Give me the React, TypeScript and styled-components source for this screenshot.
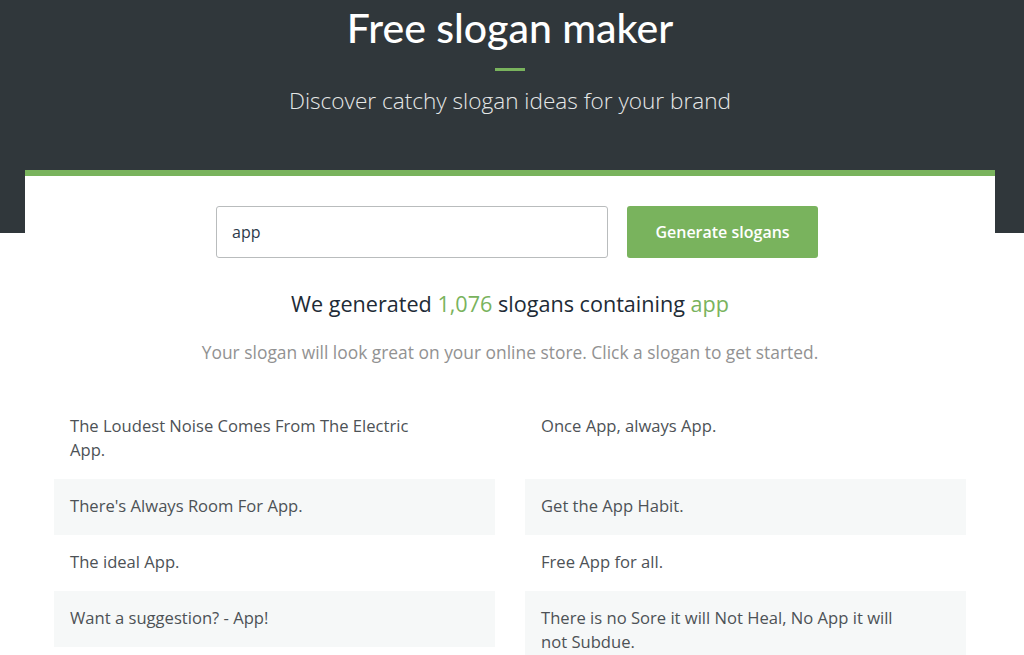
import React from "react";
import styled, { createGlobalStyle } from "styled-components";

const GlobalStyle = createGlobalStyle`
  html, body { margin: 0; padding: 0; background: #ffffff; }
  body { font-family: "Open Sans", Lato, "Liberation Sans", sans-serif; }
  * { box-sizing: border-box; }
`;

const Page = styled.div`
  background: linear-gradient(to bottom, #30373b 0, #30373b 233px, #ffffff 233px);
  min-height: 655px;
  padding: 4px 4px 0 0;
`;

const Hero = styled.header`
  display: flex;
  flex-direction: column;
  align-items: center;
  color: #ffffff;
  height: 166px;
`;

const Title = styled.h1`
  margin: 0;
  font-family: Lato, "Open Sans", sans-serif;
  font-size: 41px;
  line-height: 48px;
  font-weight: 500;
  letter-spacing: 0;
`;

const Dash = styled.span`
  display: block;
  width: 30px;
  height: 3px;
  background: #79b35d;
  margin-top: 16px;
`;

const Subtitle = styled.p`
  margin: 16px 0 0;
  font-size: 22.6px;
  line-height: 28px;
  font-weight: 300;
  color: #e6e8e8;
`;

const Card = styled.main`
  margin: 0 25px;
  background: #ffffff;
  border-top: 6px solid #79b35d;
  padding: 30px 29px 0;
`;

const Form = styled.form`
  display: flex;
  justify-content: center;
  gap: 19px;
  padding-left: 14px;
`;

const Input = styled.input`
  width: 392px;
  height: 52px;
  border: 1px solid #b9bcbd;
  border-radius: 3px;
  padding: 0 15px;
  font-family: inherit;
  font-size: 16px;
  color: #2d3a4a;
  outline: none;
`;

const Button = styled.button`
  width: 191px;
  height: 52px;
  border: none;
  border-radius: 3px;
  background: #79b35d;
  color: #ffffff;
  font-family: inherit;
  font-size: 16px;
  font-weight: 600;
  cursor: pointer;
`;

const Result = styled.h2`
  margin: 31px 0 0;
  text-align: center;
  font-size: 21.6px;
  line-height: 30px;
  font-weight: 500;
  color: #212b36;
`;

const Accent = styled.span`
  color: #79b35d;
`;

const Hint = styled.p`
  margin: 22px 0 0;
  text-align: center;
  font-size: 17.4px;
  line-height: 22px;
  color: #929292;
`;

const List = styled.ul`
  list-style: none;
  margin: 36px 0 0;
  padding: 0;
  display: grid;
  grid-template-columns: 441px 441px;
  column-gap: 30px;
  align-items: start;
`;

const Item = styled.li<{ $shade: boolean }>`
  background: ${(p) => (p.$shade ? "#f6f8f8" : "transparent")};
  padding: 15px 66px 17px 16px;
  font-size: 16.6px;
  line-height: 24px;
  color: #4d5256;
  cursor: pointer;
`;

const slogans = [
  "The Loudest Noise Comes From The Electric App.",
  "Once App, always App.",
  "There's Always Room For App.",
  "Get the App Habit.",
  "The ideal App.",
  "Free App for all.",
  "Want a suggestion? - App!",
  "There is no Sore it will Not Heal, No App it will not Subdue.",
];

export default function App() {
  return (
    <>
      <GlobalStyle />
      <Page>
        <Hero>
          <Title>Free slogan maker</Title>
          <Dash />
          <Subtitle>Discover catchy slogan ideas for your brand</Subtitle>
        </Hero>
        <Card>
          <Form onSubmit={(e) => e.preventDefault()}>
            <Input defaultValue="app" />
            <Button type="submit">Generate slogans</Button>
          </Form>
          <Result>
            We generated <Accent>1,076</Accent> slogans containing <Accent>app</Accent>
          </Result>
          <Hint>Your slogan will look great on your online store. Click a slogan to get started.</Hint>
          <List>
            {slogans.map((s, i) => (
              <Item key={s} $shade={Math.floor(i / 2) % 2 === 1}>
                {s}
              </Item>
            ))}
          </List>
        </Card>
      </Page>
    </>
  );
}
